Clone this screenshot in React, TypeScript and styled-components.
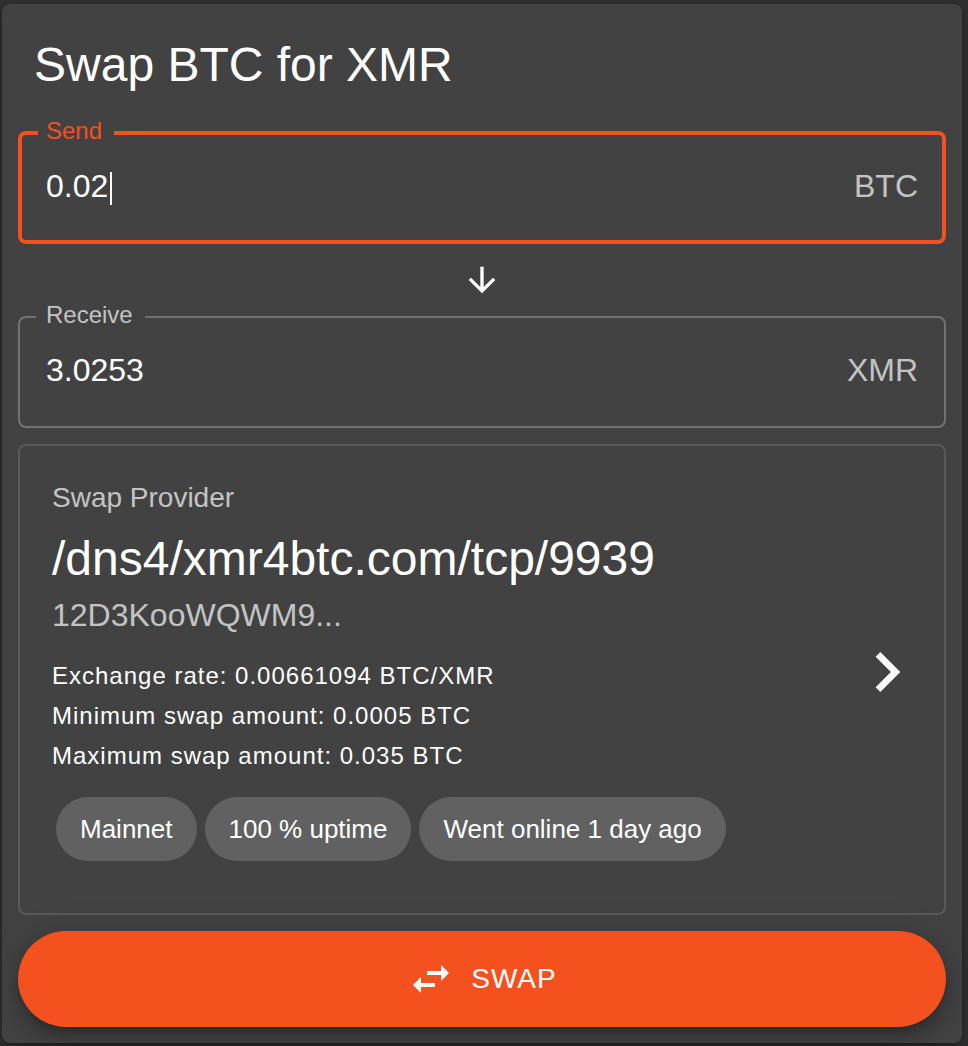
import React, { useState } from "react";
import styled, { createGlobalStyle } from "styled-components";

const accent = "#f4511e";
const secondary = "rgba(255, 255, 255, 0.7)";

const GlobalStyle = createGlobalStyle`
  *, *::before, *::after { box-sizing: border-box; }
  body {
    margin: 0;
    background: #303030;
    color: #fff;
    font-family: Helvetica, "Liberation Sans", Arial, sans-serif;
  }
`;

const Page = styled.main`
  padding: 4px 6px 3px 2px;
`;

const Card = styled.section`
  display: flex;
  flex-direction: column;
  padding: 16px;
  border-radius: 8px;
  background: #424242;
  box-shadow:
    0 6px 6px -4px rgba(0, 0, 0, 0.2),
    0 6px 8px rgba(0, 0, 0, 0.14),
    0 2px 16px rgba(0, 0, 0, 0.12);
`;

const Title = styled.h1`
  margin: 13px 16px 22px;
  font-size: 48px;
  line-height: 64px;
  font-weight: 400;
`;

const Field = styled.fieldset<{ $active?: boolean }>`
  --edge: ${(p) => (p.$active ? "4px" : "2px")};
  min-width: 0;
  margin: 0;
  padding: 0;
  border: var(--edge) solid ${(p) => (p.$active ? accent : "#727272")};
  border-radius: 8px;
`;

const FieldLegend = styled.legend<{ $active?: boolean }>`
  margin-left: 16px;
  padding: 0 12px 4px calc(12px - var(--edge));
  font-size: 24px;
  line-height: 24px;
  color: ${(p) => (p.$active ? accent : secondary)};
`;

const FieldRow = styled.div`
  display: flex;
  align-items: center;
  padding: 15px calc(28px - var(--edge)) calc(34px - var(--edge));
  font-size: 32px;
  line-height: 48px;
`;

const AmountInput = styled.input`
  field-sizing: content;
  min-width: 16px;
  height: 48px;
  padding: 0;
  border: 0;
  outline: 0;
  background: transparent;
  color: inherit;
  caret-color: transparent;
  font: inherit;
`;

const Caret = styled.span`
  width: 2px;
  height: 33px;
  margin: 4px 0 0 2px;
  background: #fff;
`;

const Unit = styled.span`
  margin-left: auto;
  color: ${secondary};
`;

const Direction = styled.div`
  display: flex;
  justify-content: center;
  padding: 16px 0 3px;
`;

const Icon = styled.svg<{ $size: number }>`
  flex: none;
  display: block;
  width: ${(p) => p.$size}px;
  height: ${(p) => p.$size}px;
  fill: currentColor;
`;

const Provider = styled.article`
  display: flex;
  align-items: center;
  justify-content: space-between;
  margin: 16px 0;
  padding: 32px 17px 48px 32px;
  border: 2px solid #595959;
  border-radius: 8px;
`;

const ProviderInfo = styled.div`
  min-width: 0;
`;

const Overline = styled.p`
  margin: 0 0 9px;
  font-size: 28px;
  line-height: 40px;
  color: ${secondary};
`;

const Address = styled.h2`
  margin: 0;
  font-size: 48px;
  line-height: 64px;
  font-weight: 400;
  overflow-wrap: anywhere;
`;

const PeerId = styled.p`
  margin: 0 0 17px;
  font-size: 32px;
  line-height: 48px;
  color: ${secondary};
`;

const Detail = styled.p`
  margin: 0;
  font-size: 24px;
  line-height: 40px;
  letter-spacing: 1px;
`;

const Chips = styled.ul`
  display: flex;
  flex-wrap: wrap;
  gap: 8px;
  margin: 17px 0 0;
  padding: 4px;
  list-style: none;
`;

const Chip = styled.li`
  padding: 0 24px;
  border-radius: 32px;
  background: #616161;
  font-size: 26px;
  line-height: 64px;
`;

const NextButton = styled.button`
  flex: none;
  padding: 0;
  border: 0;
  background: none;
  color: inherit;
  cursor: pointer;
`;

const SwapButton = styled.button`
  display: flex;
  align-items: center;
  justify-content: center;
  gap: 16px;
  height: 96px;
  border: 0;
  border-radius: 48px;
  background: ${accent};
  color: #fff;
  font-family: inherit;
  font-size: 28px;
  line-height: 48px;
  letter-spacing: 1px;
  cursor: pointer;
  box-shadow:
    0 6px 10px -2px rgba(0, 0, 0, 0.2),
    0 12px 20px rgba(0, 0, 0, 0.14),
    0 2px 36px rgba(0, 0, 0, 0.12);
`;

const details = [
  "Exchange rate: 0.00661094 BTC/XMR",
  "Minimum swap amount: 0.0005 BTC",
  "Maximum swap amount: 0.035 BTC",
];

const chips = ["Mainnet", "100 % uptime", "Went online 1 day ago"];

type AmountFieldProps = {
  id: string;
  label: string;
  unit: string;
  initial: string;
  active?: boolean;
};

function AmountField({ id, label, unit, initial, active }: AmountFieldProps) {
  const [value, setValue] = useState(initial);
  return (
    <Field $active={active}>
      <FieldLegend $active={active}>
        <label htmlFor={id}>{label}</label>
      </FieldLegend>
      <FieldRow>
        <AmountInput
          id={id}
          type="text"
          inputMode="decimal"
          value={value}
          onChange={(e) => setValue(e.target.value)}
        />
        {active && <Caret />}
        <Unit>{unit}</Unit>
      </FieldRow>
    </Field>
  );
}

export default function App() {
  return (
    <Page>
      <GlobalStyle />
      <Card>
        <Title>Swap BTC for XMR</Title>
        <AmountField id="send" label="Send" unit="BTC" initial="0.02" active />
        <Direction>
          <Icon $size={40} viewBox="0 0 24 24" aria-hidden="true">
            <path d="M20 12l-1.41-1.41L13 16.17V4h-2v12.17l-5.58-5.59L4 12l8 8 8-8z" />
          </Icon>
        </Direction>
        <AmountField id="receive" label="Receive" unit="XMR" initial="3.0253" />
        <Provider>
          <ProviderInfo>
            <Overline>Swap Provider</Overline>
            <Address>/dns4/xmr4btc.com/tcp/9939</Address>
            <PeerId>12D3KooWQWM9...</PeerId>
            {details.map((text) => (
              <Detail key={text}>{text}</Detail>
            ))}
            <Chips>
              {chips.map((text) => (
                <Chip key={text}>{text}</Chip>
              ))}
            </Chips>
          </ProviderInfo>
          <NextButton type="button" aria-label="Choose provider">
            <Icon $size={80} viewBox="0 0 24 24" aria-hidden="true">
              <path d="M10 6L8.59 7.41 13.17 12l-4.58 4.59L10 18l6-6z" />
            </Icon>
          </NextButton>
        </Provider>
        <SwapButton type="button">
          <Icon $size={48} viewBox="0 0 24 24" aria-hidden="true">
            <path d="M6.99 11L3 15l3.99 4v-3H14v-2H6.99v-3zM21 9l-3.99-4v3H10v2h7.01v3L21 9z" />
          </Icon>
          SWAP
        </SwapButton>
      </Card>
    </Page>
  );
}
